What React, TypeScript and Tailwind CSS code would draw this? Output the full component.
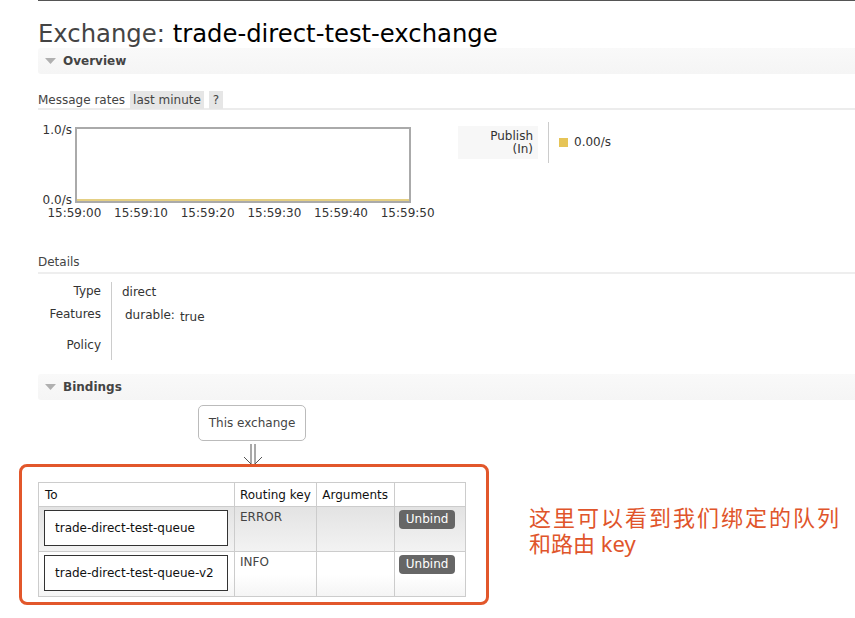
const font = { fontFamily: '"DejaVu Sans", Verdana, sans-serif' };

const SectionBar = ({ title }: { title: string }) => (
  <div className="flex h-[26px] items-center rounded-l-[3px] bg-gradient-to-b from-[#f9f9f9] to-[#f5f5f5] pl-[7px]">
    <svg width="11" height="7" viewBox="0 0 11 7" className="mr-[7px]">
      <polygon points="0,0 11,0 5.5,6" fill="#b0b0b0" />
    </svg>
    <span className="text-[12px] font-bold text-[#444]">{title}</span>
  </div>
);

const xLabels = ['15:59:00', '15:59:10', '15:59:20', '15:59:30', '15:59:40', '15:59:50'];

const Chart = () => (
  <div className="w-[412px]">
    <div className="flex">
      <div className="flex h-[76px] w-[37px] flex-col justify-between pr-[3px] text-right text-[12px] leading-[12px] text-[#333]">
        <span className="-mt-[3px]">1.0/s</span>
        <span className="-mb-[3px]">0.0/s</span>
      </div>
      <div className="relative h-[76px] w-[336px] border-2 border-[#aaa] bg-white">
        <div className="absolute bottom-0 left-0 right-0 h-[2px] bg-[#e4cf84]" />
      </div>
    </div>
    <div className="ml-[3px] mt-[4px] flex w-[400px] text-[12px] leading-[12px] text-[#333]">
      {xLabels.map((l) => (
        <span key={l} className="flex-1 text-center">
          {l}
        </span>
      ))}
    </div>
  </div>
);

const Unbind = () => (
  <button className="h-[19px] w-[56px] rounded-[4px] bg-[#666] text-[12px] leading-[19px] text-white">Unbind</button>
);

const Row = ({ queue, rk, alt }: { queue: string; rk: string; alt: boolean }) => (
  <tr className={alt ? 'bg-gradient-to-b from-[#e3e3e3] to-[#f3f3f3]' : 'bg-gradient-to-b from-white via-white to-[#f4f4f4]'}>
    <td className="h-[45px] border border-[#ccc] px-[5px] py-[3px] align-top">
      <div className="flex h-[36px] w-[184px] items-center border border-[#333] bg-white pl-[10px] text-[12px] text-[#111]">
        {queue}
      </div>
    </td>
    <td className="border border-[#ccc] px-[5px] pt-[1px] align-top text-[12px] text-[#444]">{rk}</td>
    <td className="border border-[#ccc]" />
    <td className="border border-[#ccc] px-[4px] pt-[3px] align-top">
      <Unbind />
    </td>
  </tr>
);

export default function App() {
  return (
    <div className="min-h-[618px] w-[855px] bg-white text-[12px] text-[#444]" style={font}>
      <div className="ml-[38px] h-px bg-[#555]" />
      <div className="pl-[38px]">
        <h1 className="pt-[19px] text-[24.3px] leading-[28px] font-normal text-[#444]">
          Exchange: <span className="text-black">trade-direct-test-exchange</span>
        </h1>
        <SectionBar title="Overview" />

        <div className="mt-[18px] flex h-[18px] items-center border-b-2 border-[#ececec] text-[12px] text-[#444]">
          <span className="mr-[5px]">Message rates</span>
          <span className="bg-[#e6e6e6] px-[3px] leading-[18px]">last minute</span>
          <span className="ml-[5px] bg-[#e6e6e6] px-[4px] leading-[18px]">?</span>
        </div>

        <div className="mt-[17px] flex items-start">
          <Chart />
          <div className="ml-[8px] -mt-[1px] flex h-[33px] w-[80px] flex-col items-end justify-center bg-[#f7f7f7] pr-[5px] text-[12px] leading-[13px] text-[#333]">
            <span>Publish</span>
            <span>(In)</span>
          </div>
          <div className="ml-[10px] -mt-[5px] h-[41px] w-px bg-[#ccc]" />
          <div className="ml-[10px] mt-[11px] h-[9px] w-[9px] bg-[#e6c457]" />
          <span className="ml-[6px] mt-[7px] text-[12px] leading-[16px] text-[#333]">0.00/s</span>
        </div>

        <div className="mt-[35px] border-b-2 border-[#eee] pb-[2px] text-[12px] leading-[16px] text-[#444]">Details</div>

        <div className="mt-[8px] text-[12px] leading-[16px] text-[#333]">
          <div className="flex h-[22px]">
            <div className="w-[73px] pr-[10px] pt-px text-right">Type</div>
            <div className="border-l border-[#ccc] pl-[10px] pt-[2px]">direct</div>
          </div>
          <div className="flex h-[26px]">
            <div className="w-[73px] pr-[10px] pt-[2px] text-right">Features</div>
            <div className="flex border-l border-[#ccc] pl-[13px] pt-[3px]">
              <span>durable:</span>
              <span className="ml-[5px] mt-[2px]">true</span>
            </div>
          </div>
          <div className="flex h-[30px]">
            <div className="w-[73px] pr-[10px] pt-[7px] text-right">Policy</div>
            <div className="border-l border-[#ccc]" />
          </div>
        </div>

        <div className="mt-[14px]">
          <SectionBar title="Bindings" />
        </div>

        <div className="ml-[160px] mt-[5px] flex h-[36px] w-[108px] items-center justify-center rounded-[5px] border border-[#bbb] text-[12px] text-[#444]">
          This exchange
        </div>
        <div className="ml-[205px] mt-[3px] h-[20px]">
          <svg width="20" height="23" viewBox="0 0 20 23" className="overflow-visible">
            <line x1="8" y1="0" x2="8" y2="20" stroke="#555" strokeWidth="1" />
            <line x1="12" y1="0" x2="12" y2="20" stroke="#555" strokeWidth="1" />
            <polyline points="1,13 10,22 19,13" fill="none" stroke="#555" strokeWidth="1" />
          </svg>
        </div>

        <div className="-ml-[19px] flex items-start">
          <div className="relative rounded-[8px] border-[3px] border-[#e2572b] pb-[5px] pl-[16px] pr-[20px] pt-[15px]">
            <table className="w-[428px] border-collapse text-[12px]">
              <colgroup>
                <col className="w-[196px]" />
                <col className="w-[83px]" />
                <col className="w-[78px]" />
                <col className="w-[71px]" />
              </colgroup>
              <thead>
                <tr className="bg-white">
                  <th className="h-[24px] border border-[#ccc] pl-[6px] text-left font-normal text-[#111]">To</th>
                  <th className="border border-[#ccc] pl-[5px] text-left font-normal text-[#111]">Routing key</th>
                  <th className="border border-[#ccc] pl-[5px] text-left font-normal text-[#111]">Arguments</th>
                  <th className="border border-[#ccc]" />
                </tr>
              </thead>
              <tbody>
                <Row queue="trade-direct-test-queue" rk="ERROR" alt />
                <Row queue="trade-direct-test-queue-v2" rk="INFO" alt={false} />
              </tbody>
            </table>
          </div>
          <div
            className="ml-[40px] mt-[40px] text-[22px] leading-[26px] text-[#e0552b]"
            style={{ fontFamily: '"Noto Sans", "Noto Sans CJK SC", sans-serif' }}
          >
            <div className="tracking-[2px]">这里可以看到我们绑定的队列</div>
            <div>和路由 key</div>
          </div>
        </div>
      </div>
    </div>
  );
}
